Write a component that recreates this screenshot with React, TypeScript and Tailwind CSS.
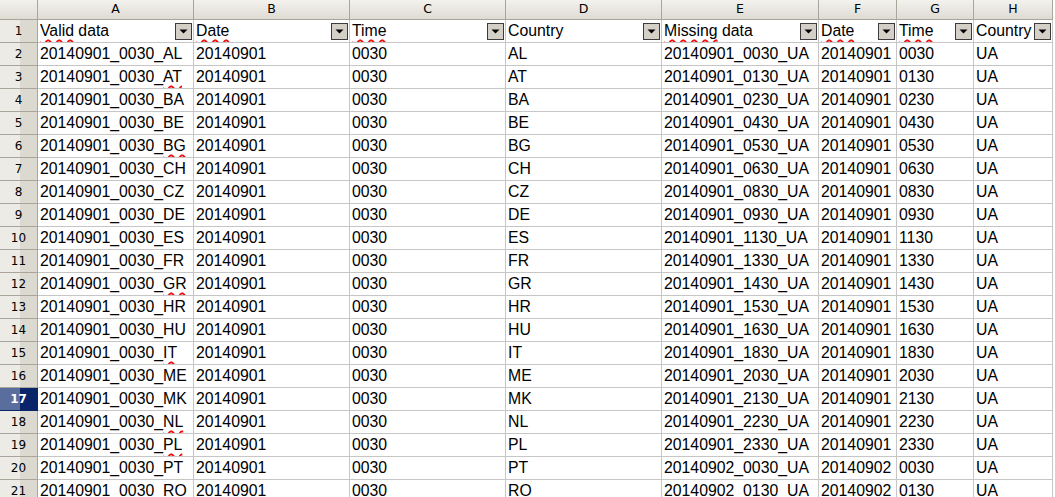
import React from "react";

const COLS = ["A", "B", "C", "D", "E", "F", "G", "H"];
const HEADERS = ["Valid data", "Date", "Time", "Country", "Missing data", "Date", "Time", "Country"];
const SQUIGGLE_HEAD = [true, true, true, false, true, true, true, false];

const CODES = ["AL", "AT", "BA", "BE", "BG", "CH", "CZ", "DE", "ES", "FR", "GR", "HR", "HU", "IT", "ME", "MK", "NL", "PL", "PT", "RO"];
const MARKED = ["AT", "BG", "GR", "IT", "NL", "PL"];
const MISSING: [string, string][] = [
  ["20140901", "0030"], ["20140901", "0130"], ["20140901", "0230"], ["20140901", "0430"],
  ["20140901", "0530"], ["20140901", "0630"], ["20140901", "0830"], ["20140901", "0930"],
  ["20140901", "1130"], ["20140901", "1330"], ["20140901", "1430"], ["20140901", "1530"],
  ["20140901", "1630"], ["20140901", "1830"], ["20140901", "2030"], ["20140901", "2130"],
  ["20140901", "2230"], ["20140901", "2330"], ["20140902", "0030"], ["20140902", "0130"],
];

const GRID = "grid grid-cols-[38px_156px_156px_156px_156px_157px_78px_77px_79px]";

function Squiggle({ children }: { children: React.ReactNode }) {
  return (
    <span className="underline decoration-wavy decoration-[#f01010] decoration-[1.5px] underline-offset-[3px]">
      {children}
    </span>
  );
}

function FilterButton() {
  return (
    <div className="flex h-[17px] w-[17px] shrink-0 items-center justify-center border border-[#3c3c3c] bg-[#d4d0c8]">
      <svg width="9" height="5" viewBox="0 0 9 5">
        <path d="M0.5 0.5 H8.5 L4.5 4.5 Z" fill="#000" />
      </svg>
    </div>
  );
}

function Cell({ children }: { children?: React.ReactNode }) {
  return (
    <div className="flex h-[23px] items-center overflow-hidden whitespace-nowrap border-b border-r border-[#c6c6c6] pl-[2px] text-[15.8px] leading-none text-black">
      {children}
    </div>
  );
}

function RowHead({ n, active }: { n: number; active?: boolean }) {
  return (
    <div
      className={
        active
          ? "flex h-[23px] items-center justify-center border-b border-r border-[#0a246a] bg-[linear-gradient(90deg,#5a6e9e_0,#5a6e9e_20px,#0a246a_20px)] font-['DejaVu_Sans',sans-serif] text-[12px] font-bold text-white"
          : "flex h-[23px] items-center justify-center border-b border-r border-[#a9a59a] bg-[linear-gradient(90deg,#ecebe6_0,#ecebe6_20px,#dcd9d0_20px)] font-['DejaVu_Sans',sans-serif] text-[12px] text-black"
      }
    >
      {n}
    </div>
  );
}

export default function App() {
  return (
    <div className="h-[497px] w-[1055px] overflow-hidden bg-white font-['Liberation_Sans',Arial,sans-serif]">
      <div className={GRID}>
        <div className="h-[20px] border-b border-r border-[#a9a59a] bg-[linear-gradient(180deg,#f3f2ee,#dedbd3)]" />
        {COLS.map((c) => (
          <div
            key={c}
            className="flex h-[20px] items-center justify-center border-b border-r border-[#a9a59a] bg-[linear-gradient(180deg,#f3f2ee,#dedbd3)] font-['DejaVu_Sans',sans-serif] text-[12.5px] text-black"
          >
            {c}
          </div>
        ))}

        <RowHead n={1} />
        {HEADERS.map((h, i) => (
          <div
            key={i}
            className="flex h-[23px] items-center justify-between overflow-hidden whitespace-nowrap border-b border-r border-[#c6c6c6] pl-[2px] pr-[1px] text-[15.8px] leading-none"
          >
            <span>
              {SQUIGGLE_HEAD[i] ? (
                <>
                  <Squiggle>{h.split(" ")[0]}</Squiggle>
                  {h.includes(" ") ? " " + h.split(" ").slice(1).join(" ") : ""}
                </>
              ) : (
                h
              )}
            </span>
            <FilterButton />
          </div>
        ))}

        {CODES.map((code, i) => {
          const [d, t] = MISSING[i];
          return (
            <React.Fragment key={code}>
              <RowHead n={i + 2} active={i + 2 === 17} />
              <Cell>
                20140901_0030_{MARKED.includes(code) ? <Squiggle>{code}</Squiggle> : code}
              </Cell>
              <Cell>20140901</Cell>
              <Cell>0030</Cell>
              <Cell>{code}</Cell>
              <Cell>{`${d}_${t}_UA`}</Cell>
              <Cell>{d}</Cell>
              <Cell>{t}</Cell>
              <Cell>UA</Cell>
            </React.Fragment>
          );
        })}
      </div>
    </div>
  );
}
